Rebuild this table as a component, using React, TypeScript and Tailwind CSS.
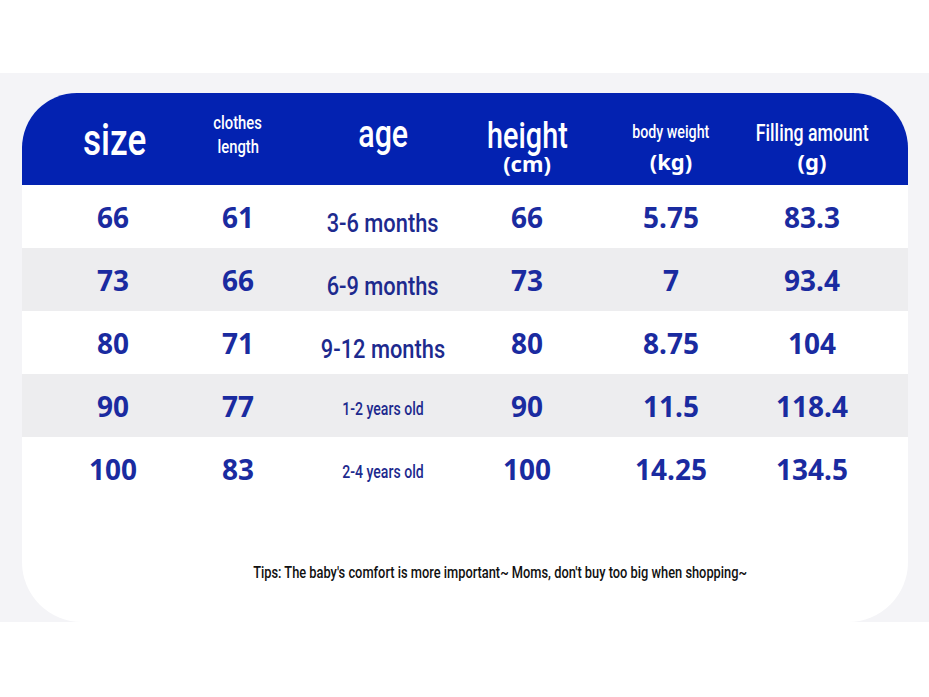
const rows = [
  { size: '66', len: '61', age: '3-6 months', small: false, height: '66', weight: '5.75', fill: '83.3' },
  { size: '73', len: '66', age: '6-9 months', small: false, height: '73', weight: '7', fill: '93.4' },
  { size: '80', len: '71', age: '9-12 months', small: false, height: '80', weight: '8.75', fill: '104' },
  { size: '90', len: '77', age: '1-2 years old', small: true, height: '90', weight: '11.5', fill: '118.4' },
  { size: '100', len: '83', age: '2-4 years old', small: true, height: '100', weight: '14.25', fill: '134.5' },
];

const roboto = "[font-family:Roboto,'Noto_Sans',sans-serif]";
const noto = "[font-family:'Noto_Sans',sans-serif]";
const grid = 'grid grid-cols-[182px_68px_222px_66px_222px_60px]';

export default function App() {
  return (
    <div className="w-[929px] h-[697px] bg-white pt-[73px]">
      <div className="h-[549px] bg-[#f4f4f7] pt-[20px]">
        <div className="ml-[22px] w-[886px] h-[529px] bg-white rounded-t-[55px] rounded-b-[60px] overflow-hidden">
          {/* header */}
          <div className={`${grid} h-[92px] bg-[#0322b1] text-white ${roboto} leading-none whitespace-nowrap`}>
            <div className="flex flex-col items-center pt-[25px] pl-[4px]">
              <span className="text-[44px] font-medium scale-x-[0.8]">size</span>
            </div>
            <div className="flex flex-col items-center pt-[18px] text-[18px] leading-[24px] font-medium">
              <span className="scale-x-[0.82]">clothes</span>
              <span className="scale-x-[0.82]">length</span>
            </div>
            <div className="flex flex-col items-center pt-[22px]">
              <span className="text-[38px] font-medium scale-x-[0.8]">age</span>
            </div>
            <div className="flex flex-col items-center pt-[25px]">
              <span className="text-[36px] font-medium scale-x-[0.8]">height</span>
              <span className={`text-[22px] font-bold -mt-[2px] ${noto}`}>(cm)</span>
            </div>
            <div className="flex flex-col items-center pt-[30px]">
              <span className="text-[18px] font-medium scale-x-[0.79]">body weight</span>
              <span className={`text-[22px] font-bold mt-[9px] ${noto}`}>(kg)</span>
            </div>
            <div className="flex flex-col items-center pt-[29px]">
              <span className="text-[23px] font-medium scale-x-[0.77]">Filling amount</span>
              <span className={`text-[22px] font-bold mt-[5px] ${noto}`}>(g)</span>
            </div>
          </div>

          {/* rows */}
          {rows.map((r, i) => (
            <div
              key={r.size}
              className={`${grid} h-[63px] ${i % 2 === 1 ? 'bg-[#ededef]' : 'bg-white'} text-[#1a2ba0] ${noto} font-bold text-[28px] leading-none whitespace-nowrap`}
            >
              <div className="flex justify-center items-center">{r.size}</div>
              <div className="flex justify-center items-center">{r.len}</div>
              <div
                className={`flex justify-center items-center ${roboto} font-medium text-[#1d2a8e] ${
                  r.small ? 'text-[19px] pt-[5px]' : 'text-[26px] pt-[12px]'
                }`}
              >
                <span className={r.small ? 'scale-x-[0.74]' : 'scale-x-[0.84]'}>{r.age}</span>
              </div>
              <div className="flex justify-center items-center">{r.height}</div>
              <div className="flex justify-center items-center">{r.weight}</div>
              <div className="flex justify-center items-center">{r.fill}</div>
            </div>
          ))}

          <div className={`mt-[64px] pl-[71px] flex justify-center text-[17px] leading-none font-medium text-[#111] whitespace-nowrap ${roboto}`}>
            <span className="scale-x-[0.755]">
              Tips: The baby's comfort is more important~ Moms, don't buy too big when shopping~
            </span>
          </div>
        </div>
      </div>
    </div>
  );
}
